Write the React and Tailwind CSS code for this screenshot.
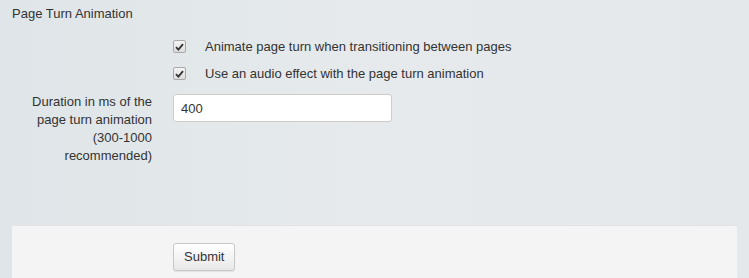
import React, { useState } from "react";

function Check({ checked, onChange, label }) {
  return (
    <label className="flex items-center h-[27px] cursor-pointer">
      <span
        onClick={onChange}
        className="flex items-center justify-center w-[13px] h-[13px] rounded-[2px] border border-[#a9a9a9] bg-gradient-to-b from-[#f4f4f4] to-[#dcdcdc]"
      >
        {checked && (
          <svg width="9" height="8" viewBox="0 0 9 8">
            <path d="M1 4.2 L3.4 6.6 L8 1.2" fill="none" stroke="#333" strokeWidth="1.8" />
          </svg>
        )}
      </span>
      <span className="ml-[19px] text-[13px] text-[#333]">{label}</span>
    </label>
  );
}

export default function App() {
  const [animate, setAnimate] = useState(true);
  const [audio, setAudio] = useState(true);
  const [duration, setDuration] = useState("400");

  return (
    <div
      className="w-[749px] h-[278px] overflow-hidden bg-gradient-to-r from-[#dfe5e8] via-[#e6eaec] to-[#e4e8ea] text-[#333]"
      style={{ fontFamily: '"Liberation Sans", Arial, sans-serif' }}
    >
      <div className="h-[225px] px-[12px] pt-[5px]">
        <h2 className="text-[13px] leading-[18px]">Page Turn Animation</h2>

        <div className="mt-[10px] pl-[161px]">
          <Check checked={animate} onChange={() => setAnimate(!animate)} label="Animate page turn when transitioning between pages" />
          <Check checked={audio} onChange={() => setAudio(!audio)} label="Use an audio effect with the page turn animation" />
        </div>

        <div className="flex mt-[7px]">
          <label className="w-[140px] -mt-[1px] text-right text-[13px] leading-[18px]">
            Duration in ms of the page turn animation (300-1000 recommended)
          </label>
          <input
            value={duration}
            onChange={(e) => setDuration(e.target.value)}
            className="ml-[21px] w-[219px] h-[28px] px-[7px] text-[13px] text-[#333] bg-white border border-[#ccc] rounded-[3px] outline-none"
          />
        </div>
      </div>

      <div className="mx-[12px] h-[53px] bg-[#f4f4f4] border-t border-[#e3e3e3] pl-[161px] pt-[17px]">
        <button className="h-[28px] px-[10px] text-[13px] text-[#333] rounded-[3px] border border-[#c8c8c8] bg-gradient-to-b from-white to-[#e8e8e8] shadow-[0_1px_1px_rgba(0,0,0,0.08)]">
          Submit
        </button>
      </div>
    </div>
  );
}
